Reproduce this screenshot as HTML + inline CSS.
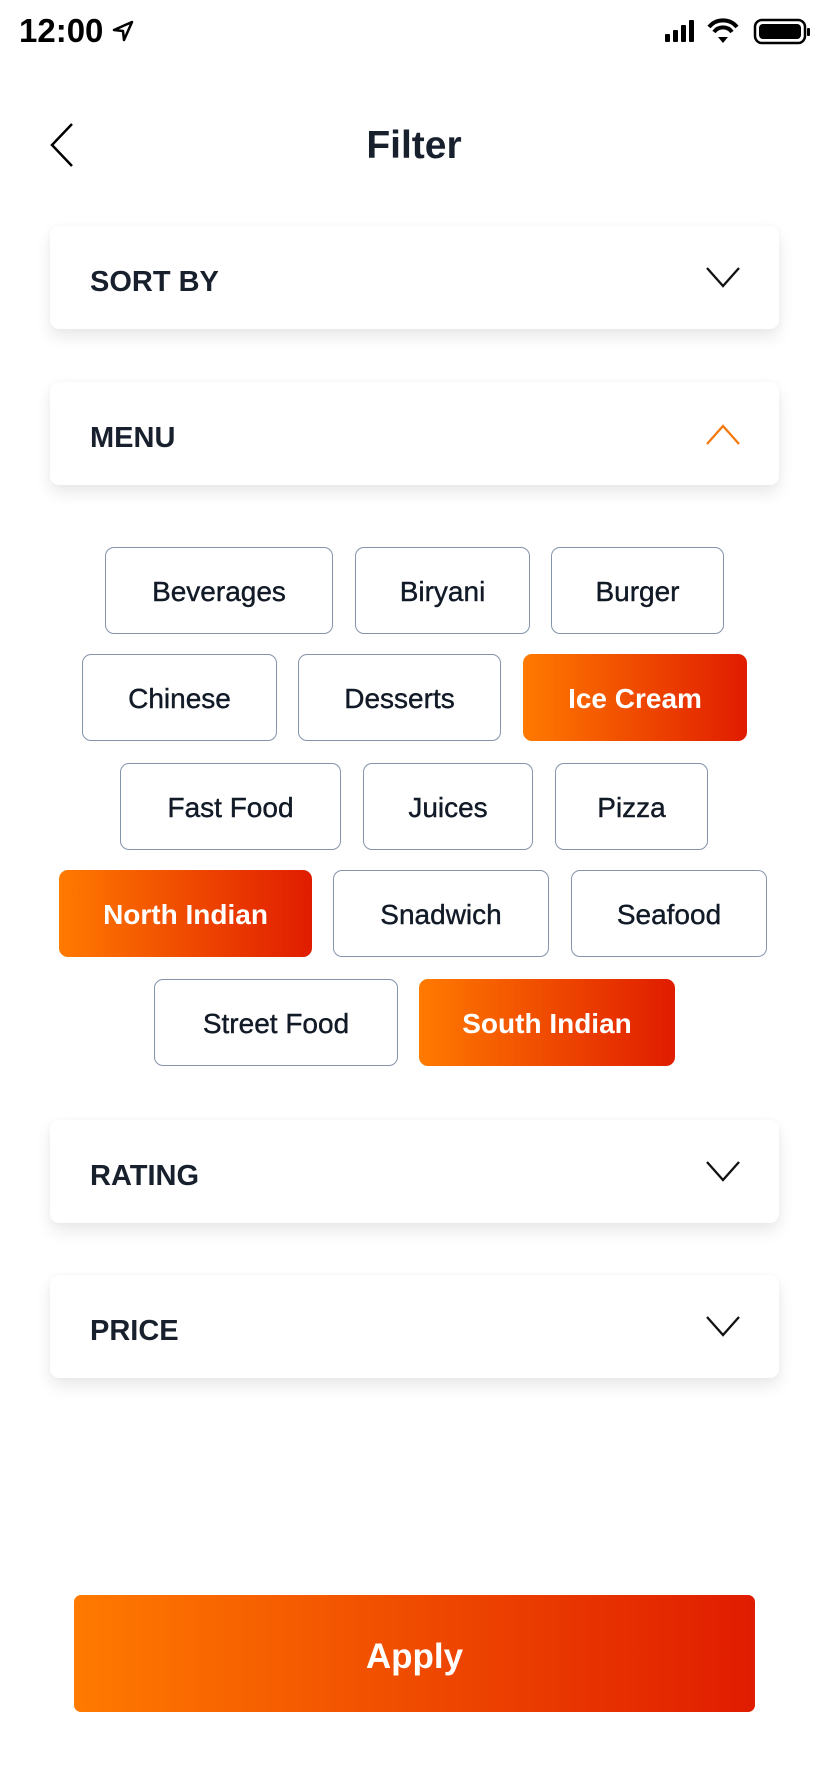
<!DOCTYPE html>
<html><head><meta charset="utf-8"><style>
*{margin:0;padding:0;box-sizing:border-box}
body{width:828px;height:1792px;background:#fff;position:relative;overflow:hidden;font-family:"Liberation Sans",sans-serif;color:#17202c}
.a{position:absolute}
.card{position:absolute;left:50px;width:729px;height:103px;background:#fff;border-radius:9px;box-shadow:0 8px 16px rgba(0,0,0,0.09),0 0 6px rgba(0,0,0,0.03)}
.card .t{position:absolute;left:40px;top:5px;line-height:103px;font-size:29px;font-weight:bold;color:#17202c}
.card svg{position:absolute;left:654px;top:38px}
.chip{position:absolute;height:87px;border:1.5px solid #8494ac;border-radius:9px;display:flex;align-items:center;justify-content:center;font-size:28px;color:#111a26;padding-top:2px;-webkit-text-stroke:0.4px #111a26}
.sel{border:none;background:linear-gradient(90deg,#ff7a00,#e01c00);color:#fff;font-weight:bold;-webkit-text-stroke:0}
</style></head><body>
<div class="a" style="left:19px;top:12px;font-size:33px;font-weight:bold;color:#000">12:00</div>
<svg class="a" style="left:112px;top:20px" width="22" height="22" viewBox="0 0 22 22"><path d="M20 2 L2 10 L11 11 L12 20 Z" fill="none" stroke="#000" stroke-width="2.5" stroke-linejoin="round"/></svg>
<svg class="a" style="left:664px;top:18px" width="160" height="28" viewBox="0 0 160 28">
<rect x="1" y="16" width="5" height="8" rx="1" fill="#000"/><rect x="9" y="12" width="5" height="12" rx="1" fill="#000"/><rect x="17" y="7" width="5" height="17" rx="1" fill="#000"/><rect x="25" y="2" width="5" height="22" rx="1" fill="#000"/>
<path d="M45 9 A18 18 0 0 1 73 9" stroke="#000" stroke-width="4" fill="none"/><path d="M50 14 A11 11 0 0 1 68 14" stroke="#000" stroke-width="4" fill="none"/><path d="M54 19 L59 25 L64 19 Z" fill="#000"/>
<rect x="91" y="2" width="50" height="23" rx="7" fill="none" stroke="#000" stroke-width="2.5"/><rect x="95" y="6" width="42" height="15" rx="4" fill="#000"/><rect x="143" y="10" width="3" height="8" rx="1" fill="#000"/>
</svg>
<svg class="a" style="left:48px;top:122px" width="28" height="46" viewBox="0 0 28 46"><path d="M24 2 L4 23 L24 44" fill="none" stroke="#000" stroke-width="2.5"/></svg>
<div class="a" style="left:0;width:828px;top:124px;text-align:center;font-size:39px;font-weight:bold;color:#17202c">Filter</div>

<div class="card" style="top:226px"><div class="t">SORT BY</div><svg width="38" height="26" viewBox="0 0 38 26"><path d="M3 4 L19 22 L35 4" fill="none" stroke="#111" stroke-width="2.3"/></svg></div>
<div class="card" style="top:382px"><div class="t">MENU</div><svg width="38" height="26" viewBox="0 0 38 26" style="top:40px"><path d="M3 22 L19 4 L35 22" fill="none" stroke="#f47a10" stroke-width="2.3"/></svg></div>

<div class="chip" style="left:105px;top:547px;width:228px">Beverages</div>
<div class="chip" style="left:355px;top:547px;width:175px">Biryani</div>
<div class="chip" style="left:551px;top:547px;width:173px">Burger</div>
<div class="chip" style="left:82px;top:654px;width:195px">Chinese</div>
<div class="chip" style="left:298px;top:654px;width:203px">Desserts</div>
<div class="chip sel" style="left:523px;top:654px;width:224px">Ice Cream</div>
<div class="chip" style="left:120px;top:763px;width:221px">Fast Food</div>
<div class="chip" style="left:363px;top:763px;width:170px">Juices</div>
<div class="chip" style="left:555px;top:763px;width:153px">Pizza</div>
<div class="chip sel" style="left:59px;top:870px;width:253px">North Indian</div>
<div class="chip" style="left:333px;top:870px;width:216px">Snadwich</div>
<div class="chip" style="left:571px;top:870px;width:196px">Seafood</div>
<div class="chip" style="left:154px;top:979px;width:244px">Street Food</div>
<div class="chip sel" style="left:419px;top:979px;width:256px">South Indian</div>

<div class="card" style="top:1120px"><div class="t">RATING</div><svg width="38" height="26" viewBox="0 0 38 26"><path d="M3 4 L19 22 L35 4" fill="none" stroke="#111" stroke-width="2.3"/></svg></div>
<div class="card" style="top:1275px"><div class="t">PRICE</div><svg width="38" height="26" viewBox="0 0 38 26"><path d="M3 4 L19 22 L35 4" fill="none" stroke="#111" stroke-width="2.3"/></svg></div>

<div class="a" style="left:74px;top:1595px;width:681px;height:117px;border-radius:7px;background:linear-gradient(90deg,#ff7a00,#e01c00);color:#fff;font-weight:bold;font-size:35px;display:flex;align-items:center;justify-content:center;padding-top:6px">Apply</div>
</body></html>
